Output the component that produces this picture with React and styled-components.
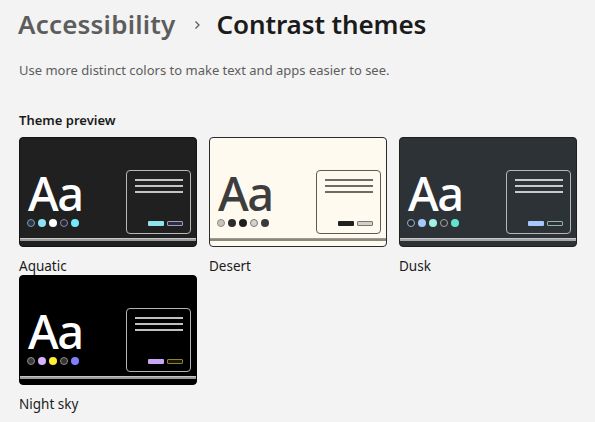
import React from "react";
import styled, { createGlobalStyle } from "styled-components";

const Global = createGlobalStyle`
  html, body { margin: 0; padding: 0; background: #f3f3f3; }
  body { font-family: "Noto Sans", "Open Sans", sans-serif; color: #1b1b1b; }
`;

const Page = styled.div`
  width: 595px;
  height: 422px;
  box-sizing: border-box;
  padding: 5px 0 0 18px;
  overflow: hidden;
`;

const Title = styled.h1`
  margin: 0;
  display: flex;
  align-items: center;
  font-size: 26px;
  font-weight: 600;
  line-height: 38px;
  letter-spacing: -0.1px;
`;

const Crumb = styled.span`
  color: ${(p) => (p.$current ? "#1b1b1b" : "#5d5d5d")};
  letter-spacing: ${(p) => (p.$current ? "-0.1px" : "0.2px")};
`;

const Chevron = styled.svg`
  width: 10px;
  height: 10px;
  margin: 2px 15px 0 16px;
`;

const Description = styled.p`
  margin: 19px 0 0 1px;
  font-size: 13px;
  line-height: 16px;
  color: #5d5d5d;
`;

const SectionLabel = styled.h2`
  margin: 34px 0 0 1px;
  font-size: 13px;
  font-weight: 600;
  line-height: 16px;
  color: #1b1b1b;
`;

const Grid = styled.div`
  margin: 9px 0 0 1px;
  display: grid;
  grid-template-columns: repeat(3, 178px);
  column-gap: 12px;
`;

const Tile = styled.div`
  display: flex;
  flex-direction: column;
`;

const Card = styled.div`
  width: 178px;
  height: 110px;
  box-sizing: border-box;
  border: 1px solid ${(p) => p.$t.edge};
  border-radius: 4px;
  background: ${(p) => p.$t.bg};
  overflow: hidden;
  display: flex;
  flex-direction: column;
`;

const Preview = styled.div`
  flex: 1;
  display: flex;
  justify-content: space-between;
  align-items: flex-end;
  padding: 0 5px 4px 8px;
`;

const Sample = styled.div`
  display: flex;
  flex-direction: column;
  padding-bottom: 7px;
`;

const Aa = styled.div`
  font-family: "Noto Sans", "Open Sans", sans-serif;
  font-size: 47px;
  line-height: 44px;
  font-weight: 500;
  letter-spacing: -1.5px;
  color: ${(p) => p.$color};
`;

const Dots = styled.div`
  display: flex;
  gap: 3px;
  margin-top: 4px;
  margin-left: -1px;
`;

const Dot = styled.span`
  width: 8px;
  height: 8px;
  box-sizing: border-box;
  border-radius: 50%;
  background: ${(p) => p.$fill};
  border: ${(p) => (p.$ring ? `1.5px solid ${p.$ring}` : "none")};
`;

const Window = styled.div`
  width: 65px;
  height: 64px;
  box-sizing: border-box;
  border: 1.5px solid ${(p) => p.$border};
  border-radius: 4px;
  display: flex;
  flex-direction: column;
  justify-content: space-between;
  padding: 7.5px;
`;

const Lines = styled.div`
  display: flex;
  flex-direction: column;
  gap: 4px;
`;

const Line = styled.span`
  height: 2px;
  background: ${(p) => p.$color};
`;

const Buttons = styled.div`
  display: flex;
  justify-content: flex-end;
  gap: 3px;
`;

const Btn = styled.span`
  width: 16px;
  height: 5px;
  box-sizing: border-box;
  border-radius: 1px;
  background: ${(p) => p.$fill};
  border: ${(p) => (p.$ring ? `1px solid ${p.$ring}` : "none")};
`;

const Rule = styled.div`
  height: 3px;
  margin-bottom: 5px;
  background: ${(p) => p.$color};
  border-top: 1px solid ${(p) => p.$hi};
  box-sizing: border-box;
`;

const Name = styled.div`
  height: 28px;
  box-sizing: border-box;
  padding-top: 11px;
  font-size: 13.5px;
  line-height: 16px;
  color: #1b1b1b;
`;

const themes = [
  {
    name: "Aquatic",
    bg: "#202020",
    edge: "#141414",
    text: "#ffffff",
    dots: [
      { fill: "#26384a", ring: "#8497aa" },
      { fill: "#8ee3f0" },
      { fill: "#ffffff" },
      { fill: "#26263a", ring: "#8a8aa0" },
      { fill: "#75e9fc" },
    ],
    window: "#b8b8b8",
    line: "#c4c4c4",
    btn: { fill: "#8ee3f0" },
    btn2: { fill: "#2c2c44", ring: "#a0a0b4" },
    rule: "#9c9c9c",
    hi: "#c8c8c8",
  },
  {
    name: "Desert",
    bg: "#fffaef",
    edge: "#2b2b2b",
    text: "#3d3d3d",
    dots: [
      { fill: "#c8c4bc", ring: "#8d8a84" },
      { fill: "#2b2b2b" },
      { fill: "#1e1e1e" },
      { fill: "#d6d2cc", ring: "#7c7a76" },
      { fill: "#3a3a3a" },
    ],
    window: "#5e5b55",
    line: "#6e6b66",
    btn: { fill: "#202020" },
    btn2: { fill: "#d2cfca", ring: "#7a7670" },
    rule: "#8b877f",
    hi: "#9e9a92",
  },
  {
    name: "Dusk",
    bg: "#2d3236",
    edge: "#1c1f22",
    text: "#ffffff",
    dots: [
      { fill: "#1d2a3a", ring: "#a8b0b8" },
      { fill: "#a6c8f8" },
      { fill: "#a1f1e6" },
      { fill: "#2d3236", ring: "#a4a4a4" },
      { fill: "#62e3d0" },
    ],
    window: "#b4b8bc",
    line: "#c8cacc",
    btn: { fill: "#a6c8ff" },
    btn2: { fill: "#2d3236", ring: "#8fb5a6" },
    rule: "#a2a6aa",
    hi: "#c6c8ca",
  },
  {
    name: "Night sky",
    bg: "#000000",
    edge: "#000000",
    text: "#ffffff",
    dots: [
      { fill: "#3a3a3a", ring: "#8a8a8a" },
      { fill: "#d6b4fd" },
      { fill: "#ffee32" },
      { fill: "#333333", ring: "#888888" },
      { fill: "#8080ff" },
    ],
    window: "#b4b4b4",
    line: "#c0c0c0",
    btn: { fill: "#c9a6f5" },
    btn2: { fill: "#1a1800", ring: "#8c8530" },
    rule: "#9a9a9a",
    hi: "#c4c4c4",
  },
];

function ThemeCard({ t }) {
  return (
    <Tile>
      <Card $t={t}>
        <Preview>
          <Sample>
            <Aa $color={t.text}>Aa</Aa>
            <Dots>
              {t.dots.map((d, i) => (
                <Dot key={i} $fill={d.fill} $ring={d.ring} />
              ))}
            </Dots>
          </Sample>
          <Window $border={t.window}>
            <Lines>
              <Line $color={t.line} />
              <Line $color={t.line} />
              <Line $color={t.line} />
            </Lines>
            <Buttons>
              <Btn $fill={t.btn.fill} />
              <Btn $fill={t.btn2.fill} $ring={t.btn2.ring} />
            </Buttons>
          </Window>
        </Preview>
        <Rule $color={t.rule} $hi={t.hi} />
      </Card>
      <Name>{t.name}</Name>
    </Tile>
  );
}

export default function App() {
  return (
    <>
      <Global />
      <Page>
        <Title>
          <Crumb>Accessibility</Crumb>
          <Chevron viewBox="0 0 10 10">
            <path d="M3.5 1.5 L7 5 L3.5 8.5" fill="none" stroke="#5d5d5d" strokeWidth="1.3" />
          </Chevron>
          <Crumb $current>Contrast themes</Crumb>
        </Title>
        <Description>Use more distinct colors to make text and apps easier to see.</Description>
        <SectionLabel>Theme preview</SectionLabel>
        <Grid>
          {themes.map((t) => (
            <ThemeCard key={t.name} t={t} />
          ))}
        </Grid>
      </Page>
    </>
  );
}
